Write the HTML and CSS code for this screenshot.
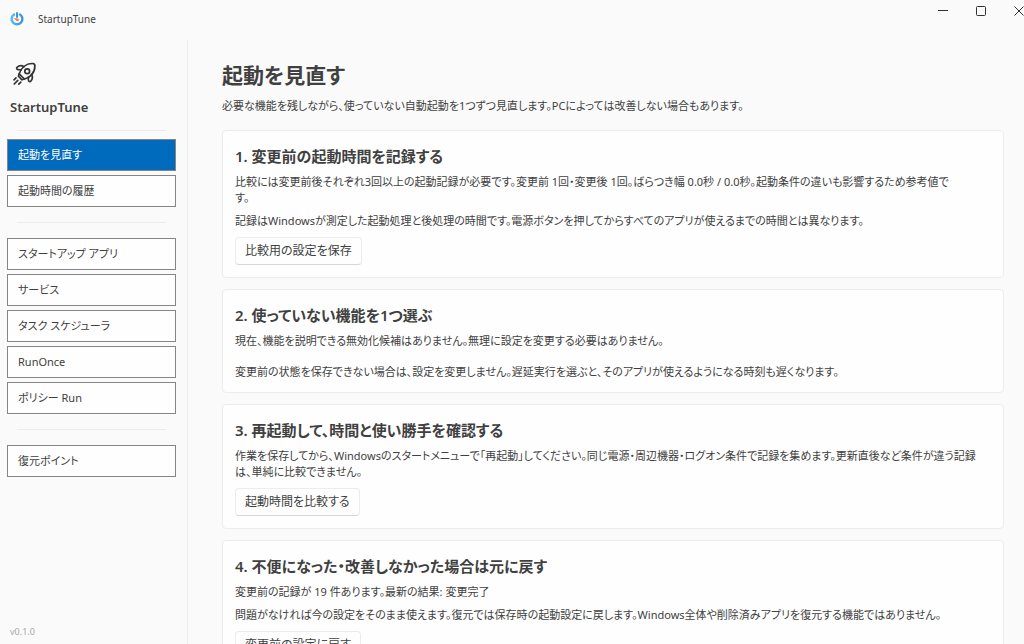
FILE: index.html
```
<!DOCTYPE html>
<html lang="ja">
<head>
    <meta charset="UTF-8">
    <meta name="viewport" content="width=device-width, initial-scale=1.0">
    <title>StartupTune</title>
    <link rel="stylesheet" href="styles.css">
</head>
<body>
    <header class="titlebar">
        <svg class="app-icon" viewBox="0 0 16 16" aria-hidden="true">
            <defs>
                <linearGradient id="ring" x1="0" y1="0" x2="1" y2="0">
                    <stop offset="0" stop-color="#4dbdf5"/>
                    <stop offset="1" stop-color="#3a95ea"/>
                </linearGradient>
            </defs>
            <path d="M5 3.400A5.400 5.400 0 1 0 11 3.400" fill="none" stroke="url(#ring)" stroke-width="2.400" stroke-linecap="round"/>
            <path d="M8 2v4" stroke="#2a86e0" stroke-width="1.800" stroke-linecap="round"/>
            <path d="M4.600 7 8.800 7.400a1.400 1.400 0 1 1-1.600 2z" fill="#f0804a"/>
        </svg>
        <span class="app-title">StartupTune</span>
        <div class="window-controls">
            <button type="button" aria-label="最小化">
                <svg viewBox="0 0 12 12"><path d="M1 5.500h10"/></svg>
            </button>
            <button type="button" aria-label="最大化">
                <svg viewBox="0 0 12 12"><rect x="1.500" y="1.500" width="9" height="9" rx="1"/></svg>
            </button>
            <button type="button" aria-label="閉じる">
                <svg viewBox="0 0 12 12"><path d="M1.500 1.500l9 9M10.500 1.500l-9 9"/></svg>
            </button>
        </div>
    </header>

    <div class="layout">
        <aside class="sidebar">
            <svg class="rocket" viewBox="0 0 24 24" aria-hidden="true">
                <path d="M7.200 11.800C9 6.500 13.500 1.500 20.500 1.500c1.800 0 2.400.7 2.400 2.400C22.900 11 18 15.600 12.400 17z"/>
                <circle cx="15.200" cy="9.200" r="2.400"/>
                <path d="M9.200 8 6.200 7.700c-1.600-.1-2-1.700-1-2.500 2-1.800 4.800-1.700 6.800-.500"/>
                <path d="M16.200 15l.2 3c.1 1.600 1.700 2 2.500 1 1.800-2 1.700-4.800.5-6.800"/>
                <path d="M7.200 11.800l-.8 2.400 3.600 3.600 2.400-.8"/>
                <path d="M4 15.800l-2 2M5.800 18.400l-3.600 3.600M8.800 20.200l-2 2"/>
            </svg>
            <p class="brand">StartupTune</p>
            <hr>
            <nav>
                <button type="button" class="nav-item active">起動を見直す</button>
                <button type="button" class="nav-item">起動時間の履歴</button>
            </nav>
            <hr>
            <nav>
                <button type="button" class="nav-item">スタートアップ アプリ</button>
                <button type="button" class="nav-item">サービス</button>
                <button type="button" class="nav-item">タスク スケジューラ</button>
                <button type="button" class="nav-item">RunOnce</button>
                <button type="button" class="nav-item">ポリシー Run</button>
            </nav>
            <hr>
            <nav>
                <button type="button" class="nav-item">復元ポイント</button>
            </nav>
            <span class="version">v0.1.0</span>
        </aside>

        <main class="content">
            <h1>起動を見直す</h1>
            <p class="lead">必要な機能を残しながら、使っていない自動起動を1つずつ見直します。PCによっては改善しない場合もあります。</p>

            <section class="card">
                <h2>1. 変更前の起動時間を記録する</h2>
                <p>比較には変更前後それぞれ3回以上の起動記録が必要です。変更前 1回・変更後 1回。ばらつき幅 0.0秒 / 0.0秒。起動条件の違いも影響するため参考値で<br>す。</p>
                <p>記録はWindowsが測定した起動処理と後処理の時間です。電源ボタンを押してからすべてのアプリが使えるまでの時間とは異なります。</p>
                <button type="button" class="btn">比較用の設定を保存</button>
            </section>

            <section class="card">
                <h2>2. 使っていない機能を1つ選ぶ</h2>
                <p>現在、機能を説明できる無効化候補はありません。無理に設定を変更する必要はありません。</p>
                <p class="note">変更前の状態を保存できない場合は、設定を変更しません。遅延実行を選ぶと、そのアプリが使えるようになる時刻も遅くなります。</p>
            </section>

            <section class="card">
                <h2>3. 再起動して、時間と使い勝手を確認する</h2>
                <p>作業を保存してから、Windowsのスタートメニューで「再起動」してください。同じ電源・周辺機器・ログオン条件で記録を集めます。更新直後など条件が違う記録<br>は、単純に比較できません。</p>
                <button type="button" class="btn">起動時間を比較する</button>
            </section>

            <section class="card">
                <h2>4. 不便になった・改善しなかった場合は元に戻す</h2>
                <p>変更前の記録が 19 件あります。最新の結果: 変更完了</p>
                <p>問題がなければ今の設定をそのまま使えます。復元では保存時の起動設定に戻します。Windows全体や削除済みアプリを復元する機能ではありません。</p>
                <button type="button" class="btn">変更前の設定に戻す</button>
            </section>
        </main>
    </div>
</body>
</html>
```
FILE: styles.css
```
:root {
    --accent: #006abc;
    --text-color: #404040;
    --background-color: #fafafa;
    --line-color: #ececec;
}

* {
    margin: 0;
    padding: 0;
    box-sizing: border-box;
}

body {
    display: flex;
    flex-direction: column;
    height: 100vh;
    overflow: hidden;
    font-family: "Noto Sans", "Noto Sans CJK JP", sans-serif;
    font-size: 11px;
    line-height: 16px;
    font-feature-settings: "palt";
    background-color: var(--background-color);
    color: var(--text-color);
}

button {
    font: inherit;
    font-feature-settings: inherit;
    color: inherit;
}

.titlebar {
    display: flex;
    align-items: center;
    flex: none;
    height: 40px;
    padding: 0 0 3px 9px;
}

.app-icon {
    width: 16px;
    height: 16px;
    margin-right: 13px;
}

.app-title {
    font-size: 10px;
}

.window-controls {
    display: flex;
    align-self: flex-start;
    margin-left: auto;
    margin-right: -14px;
}

.window-controls button {
    display: flex;
    align-items: center;
    justify-content: center;
    width: 38px;
    height: 22px;
    border: none;
    background: none;
}

.window-controls svg {
    width: 12px;
    height: 12px;
    fill: none;
    stroke: #333;
}

.layout {
    display: flex;
    flex: 1;
    min-height: 0;
}

.sidebar {
    display: flex;
    flex-direction: column;
    flex: none;
    width: 188px;
    padding: 22px 11px 4px 7px;
    border-right: 1px solid var(--line-color);
}

.rocket {
    width: 24px;
    height: 24px;
    margin-left: 5px;
    fill: none;
    stroke: #333;
    stroke-width: 1.7;
    stroke-linecap: round;
    stroke-linejoin: round;
}

.brand {
    margin: 13px 0 0 3px;
    font-size: 13px;
    font-weight: 600;
}

.sidebar hr {
    margin: 15px 10px;
    border: none;
    border-top: 1px solid var(--line-color);
}

.brand + hr {
    margin-bottom: 8px;
}

.sidebar nav {
    display: flex;
    flex-direction: column;
    gap: 4px;
}

.nav-item {
    height: 32px;
    padding: 0 10px;
    border: 1px solid #858585;
    background-color: #fefefe;
    text-align: left;
}

.nav-item.active {
    background-color: var(--accent);
    color: white;
}

.version {
    margin: auto 0 0 3px;
    font-size: 9px;
    color: #a8a8a8;
}

.content {
    flex: 1;
    min-width: 0;
    padding: 19px 20px 20px 34px;
    overflow: hidden;
}

h1 {
    font-size: 21px;
    font-weight: 600;
    line-height: 32px;
}

.lead {
    margin: 7px 0 16px;
}

.card {
    margin-bottom: 11px;
    padding: 13px 12px 12px;
    border: 1px solid var(--line-color);
    border-radius: 4px;
    background-color: #fefefe;
}

.card h2 {
    margin-bottom: 6px;
    font-size: 15px;
    font-weight: 600;
    line-height: 24px;
}

.card p + p {
    margin-top: 7px;
}

.card p + .note {
    margin-top: 15px;
}

.btn {
    display: block;
    height: 28px;
    margin-top: 8px;
    padding: 0 9px;
    border: 1px solid var(--line-color);
    border-bottom-color: #d6d6d6;
    border-radius: 4px;
    background-color: #fefefe;
    font-size: 12px;
}
```
